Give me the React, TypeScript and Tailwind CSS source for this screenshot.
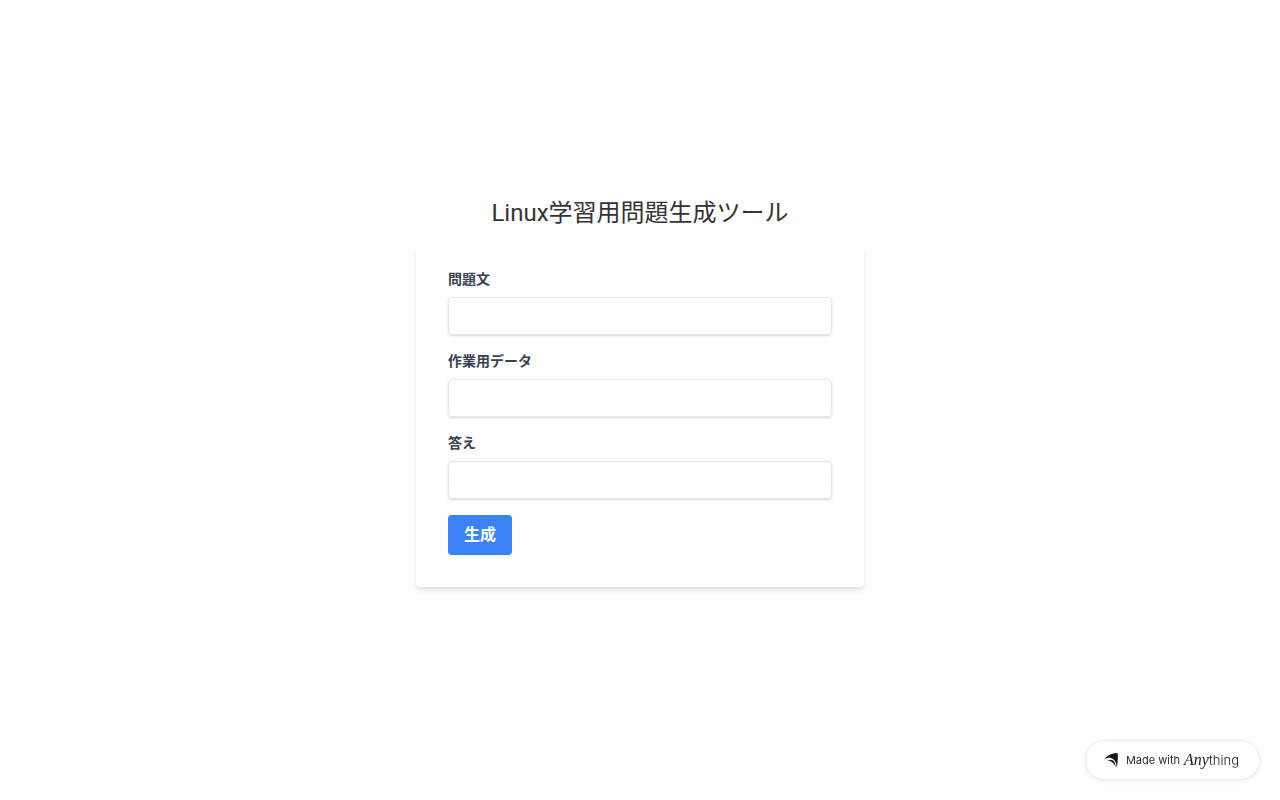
import { useState } from "react";

const fields = [
  { id: "question", label: "問題文" },
  { id: "data", label: "作業用データ" },
  { id: "answer", label: "答え" },
];

function MadeWithBadge() {
  return (
    <a
      href="#"
      className="fixed right-5 bottom-5 flex h-10 items-center rounded-full border border-[#ececec] bg-white pr-5 pl-[18px] font-['Inter',sans-serif] shadow-[0_1px_4px_rgba(0,0,0,0.08)]"
    >
      <svg className="mr-2 h-4 w-[14px]" viewBox="0 0 14 16" fill="#18191b" aria-hidden="true">
        <path d="M0 7.4C2.6 3.8 6.8 1.4 12.2 1C13.2 1 13.8 1.5 13.8 2.4C14 6.9 13.7 11.2 12.8 15.4C12.4 10.6 10.8 7.3 7.4 6.2C5 5.4 2.3 6 0 7.4Z" />
        <path d="M3.4 8.5C6.2 7 9.2 7.7 10.4 10C11.1 11.3 11.5 13 11.7 15C9.9 11.2 7.4 8.7 3.4 8.5Z" />
      </svg>
      <span className="mr-1 text-[11px] text-[#2b2b33]">Made with</span>
      <span className="flex items-baseline text-[#18191b]">
        <span className="font-['Liberation_Serif',serif] text-base italic">Any</span>
        <span className="text-[13px] font-light">thing</span>
      </span>
    </a>
  );
}

export default function App() {
  const [values, setValues] = useState<Record<string, string>>({});

  return (
    <div className="flex min-h-screen flex-col items-center justify-center bg-[#fefefe] font-['Roboto','Noto_Sans_CJK_JP',sans-serif]">
      <h1 className="mb-4 text-2xl text-[#333]">Linux学習用問題生成ツール</h1>

      <form
        className="mb-4 w-full max-w-md rounded bg-white px-8 pt-6 pb-8 shadow-[0_4px_6px_-1px_rgba(0,0,0,0.1),0_2px_4px_-1px_rgba(0,0,0,0.06)]"
        onSubmit={(e) => e.preventDefault()}
      >
        {fields.map((field) => (
          <div className="mb-4" key={field.id}>
            <label className="mb-2 block text-sm font-bold text-[#374151]" htmlFor={field.id}>
              {field.label}
            </label>
            <input
              id={field.id}
              type="text"
              className="block w-full appearance-none rounded border border-[#e5e7eb] px-3 py-2 leading-5 text-[#374151] shadow-[0_1px_3px_0_rgba(0,0,0,0.1),0_1px_2px_0_rgba(0,0,0,0.06)] focus:outline-none"
              value={values[field.id] ?? ""}
              onChange={(e) => setValues({ ...values, [field.id]: e.target.value })}
            />
          </div>
        ))}

        <button
          type="submit"
          className="block rounded bg-[#3b82f6] px-4 py-2 font-bold text-white hover:bg-[#1d4ed8]"
        >
          生成
        </button>
      </form>

      <MadeWithBadge />
    </div>
  );
}
